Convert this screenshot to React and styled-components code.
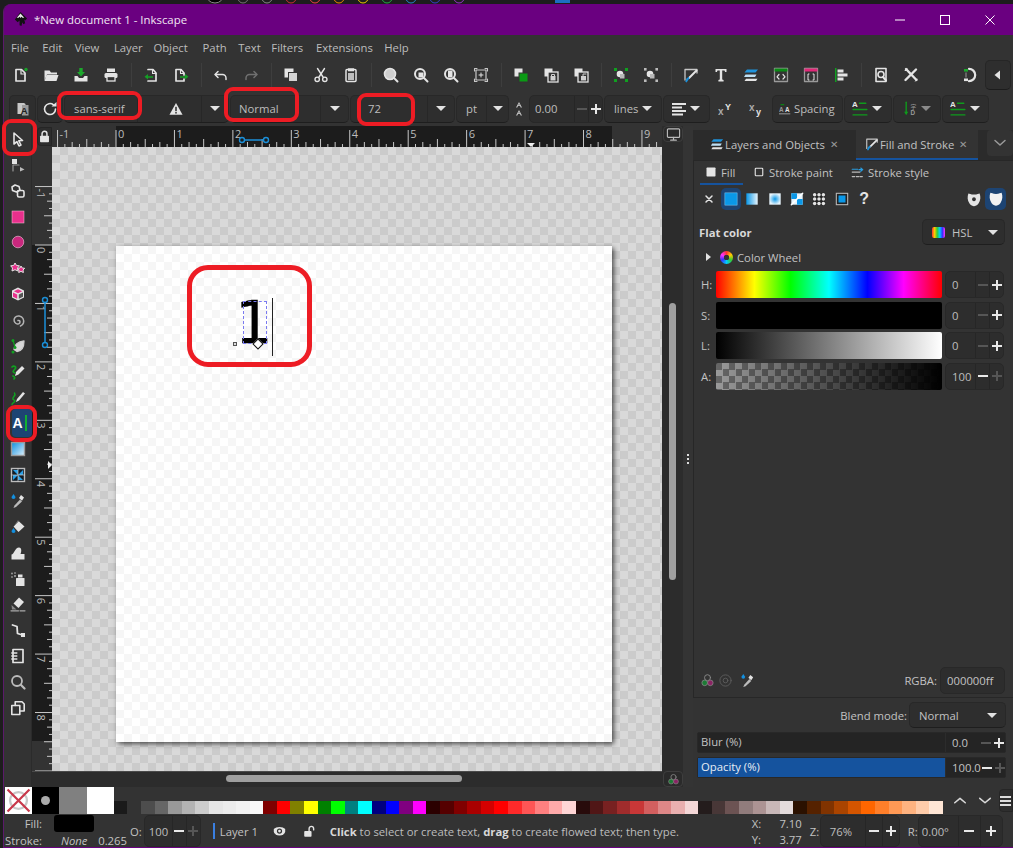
import React from 'react';
import styled, { createGlobalStyle } from 'styled-components';

const UI = '"Open Sans", "Noto Sans", "Liberation Sans", sans-serif';
const W = '#e4e4e4';
const B = '#1b8fd8';
const P = '#e8308c';

const GlobalStyle = createGlobalStyle`
  html, body { margin: 0; padding: 0; background: #1d1d1d; }
  * { box-sizing: border-box; }
  #root { width: 1013px; height: 848px; overflow: hidden; }
`;

const Screen = styled.div`
  position: relative; width: 1013px; height: 848px; overflow: hidden;
  background: #1d1d1d; font-family: ${UI}; font-size: 11.3px; color: #c2c2c2;
  display: flex; flex-direction: column; align-items: flex-end;
`;
const TopBand = styled.svg`display: block; width: 1013px; height: 4px; flex: none;`;
const Window = styled.div`
  width: 1010px; height: 844px; flex: none; background: #333; display: flex; flex-direction: column;
  border-radius: 8px 0 0 0; overflow: hidden; border-left: 1px solid #5b1a6b; border-bottom: 1px solid #6a0080;
`;
const TitleBar = styled.header`
  height: 31px; flex: none; background: #6a0080; display: flex; align-items: center; padding-left: 9px; color: #f0e6f2;
`;
const AppTitle = styled.span`font-size: 11.4px; margin-left: 6px; flex: 1; white-space: nowrap;`;
const WinControls = styled.div`display: flex; align-items: center; margin-right: 1px;`;
const WinButton = styled.span`width: 45px; height: 31px; display: flex; align-items: center; justify-content: center;`;
const MenuBar = styled.nav`height: 25px; flex: none; display: flex; align-items: center; padding-left: 7px; color: #bdbdbd;`;
const MenuItem = styled.span`margin-right: ${p => p.$gap}px; white-space: nowrap;`;
const CommandBar = styled.div`height: 31px; flex: none; display: flex; align-items: center; padding: 0 0 2px 2px;`;
const Slot = styled.span`
  width: ${p => p.$w || 30}px; height: ${p => p.$h || 24}px; flex: none; display: flex; align-items: center; justify-content: center;
`;
const Sep = styled.span`width: 10px; height: 24px; flex: none; background: linear-gradient(#3e3e3e,#3e3e3e) center / 1px 100% no-repeat;`;
const Grow = styled.span`flex: 1;`;
const SquareButton = styled.span`
  width: 26px; height: 30px; margin-right: 2px; flex: none; display: flex; align-items: center; justify-content: center;
  background: #2e2e2e; border: 1px solid #262626; border-bottom-color: #1c1c1c; border-radius: 5px;
`;
const TextBar = styled.div`height: 35px; flex: none; display: flex; align-items: center; gap: 1px; padding: 0 0 0 5px;`;
const Control = styled.div`
  width: ${p => p.$w}px; height: 28px; flex: none; display: flex; align-items: center; padding-left: ${p => p.$pad ?? 0}px;
  justify-content: ${p => p.$center ? 'center' : 'flex-start'};
  background: #2e2e2e; border: 1px solid #282828; border-bottom-color: #1e1e1e; border-radius: 5px; color: #bdbdbd; white-space: nowrap;
`;
const PlainSlot = styled.span`width: ${p => p.$w}px; height: 28px; flex: none; display: flex; align-items: center; justify-content: center;`;
const ComboArrow = styled.span`
  width: ${p => p.$w || 27}px; height: 100%; margin-left: auto; flex: none; display: flex; align-items: center; justify-content: center;
  border-left: 1px solid #272727;
`;
const Caret = styled.i`
  display: block; width: 0; height: 0; margin-left: ${p => p.$ml || 0}px; border-left: 5px solid transparent; border-right: 5px solid transparent;
  border-top: 5.5px solid ${p => p.$dim ? '#8a8a8a' : '#e2e2e2'};
`;
const Workspace = styled.div`flex: 1; min-height: 0; display: flex;`;
const ToolRail = styled.aside`
  width: 28px; flex: none; padding: 0 0 0 1px; display: flex; flex-direction: column; align-items: center; border-right: 1px solid #2b2b2b;
`;
const Tool = styled.span`width: 24px; height: 25.86px; flex: none; display: flex; align-items: center; justify-content: center;`;
const ActiveTool = styled.span`
  width: 20px; height: 27.86px; margin: -1px 0 -1px 7px; padding-left: 1px; flex: none; display: flex; align-items: center; gap: 2px;
  background: #1d4473; border-radius: 4px; color: #fff; font: 700 14px "Liberation Sans", sans-serif;
`;
const Stage = styled.section`
  width: 661px; flex: none; display: grid; grid-template-columns: 20px 610px 31px; grid-template-rows: 21px 624px 16px;
`;
const Corner = styled.div`display: flex; align-items: center; justify-content: flex-end; background: #333;`;
const LockButton = styled.span`
  width: 15px; height: 19px; display: flex; align-items: center; justify-content: center; background: #2d2d2d; border-radius: 4px 0 0 4px; border: 1px solid #252525;
`;
const Rule = styled.svg`display: block;`;
const Canvas = styled.main`
  background: conic-gradient(#cbcbcb 25%, #d9d9d9 0 50%, #cbcbcb 0 75%, #d9d9d9 0) 0 0 / 16px 16px;
  overflow: hidden; padding: 99px 0 0 64px;
`;
const Sheet = styled.div`
  position: relative; width: 496px; height: 496px;
  background: conic-gradient(#fff 25%, #f6f6f6 0 50%, #fff 0 75%, #f6f6f6 0) 0 0 / 16px 16px;
  box-shadow: 2px 2px 5px rgba(0,0,0,.65);
`;
const Glyph = styled.span`
  position: absolute; left: 119px; top: 42px; font: 59px/70px "DejaVu Sans", sans-serif; color: #000; -webkit-text-stroke: 0.3px #000;
`;
const DashBox = styled.span`position: absolute; left: 127px; top: 55px; width: 24px; height: 43px; border: 1px dashed #7a7af0;`;
const Caretline = styled.span`position: absolute; left: 156px; top: 52px; width: 1px; height: 58px; background: #222;`;
const HandleSq = styled.span`position: absolute; left: 117px; top: 96px; width: 4px; height: 4px; border: 1px solid #555; background: #ddd;`;
const HandleDia = styled.span`position: absolute; left: 138px; top: 94px; width: 8px; height: 8px; transform: rotate(45deg); border: 1px solid #111; background: #fff;`;
const ScrollCell = styled.div`display: flex; background: #2c2c2c;`;
const VTrack = styled.div`width: 21px; flex: none; padding: 156px 0 0 7px;`;
const VThumb = styled.div`width: 7px; height: 277px; border-radius: 4px; background: #9f9f9f;`;
const GripCell = styled.div`flex: 1; background: #343434; display: flex; flex-direction: column; justify-content: center; align-items: center; gap: 2px;`;
const GripDot = styled.i`display: block; width: 2px; height: 2px; background: #dcdcdc;`;
const HTrack = styled.div`grid-column: 1 / span 2; background: #2c2c2c; border-top: 1px solid #4a4a4a; padding: 3px 0 0 194px;`;
const HThumb = styled.div`width: 236px; height: 7px; border-radius: 4px; background: #9f9f9f;`;
const ManagedCell = styled.div`display: flex; background: #2c2c2c;`;
const ManagedButton = styled.span`
  width: 20px; height: 16px; margin-left: 1px; flex: none; display: flex; align-items: center; justify-content: center;
  border: 1px solid #3e3e3e; border-radius: 4px; background: #2a2a2a;
`;
const ManagedFill = styled.span`flex: 1; background: #343434;`;
const Dock = styled.aside`flex: 1; min-width: 0; display: flex; flex-direction: column; padding-bottom: 5px;`;
const TabStrip = styled.div`height: 34px; flex: none; padding-top: 4px; display: flex; background: linear-gradient(#333 4px, #2b2b2b 4px);`;
const DockTab = styled.div`
  width: ${p => p.$w}px; flex: none; display: flex; align-items: center; gap: 1px; padding-left: ${p => p.$pad}px; white-space: nowrap; color: #c2c2c2;
  background: ${p => p.$on ? '#333' : 'transparent'}; border-bottom: 2px solid ${p => p.$on ? '#15539e' : 'transparent'};
`;
const TabClose = styled.span`margin-left: 4px; color: #9a9a9a; font-size: 10px;`;
const TabMenu = styled.span`
  width: 26px; height: 26px; margin: 0 0 0 auto; display: flex; align-items: center; justify-content: center; background: #333; border-radius: 4px;
`;
const Frame = styled.div`
  flex: 1; min-height: 0; display: flex; flex-direction: column; border: 1px solid #272727; border-right: 0;
`;
const SubTabs = styled.div`height: 24px; flex: none; display: flex; padding-left: 6px; align-items: stretch;`;
const SubTab = styled.div`
  width: ${p => p.$w}px; flex: none; display: flex; align-items: center; gap: 4px; padding-left: ${p => p.$pad}px; white-space: nowrap;
  border-bottom: 2px solid ${p => p.$on ? '#15539e' : 'transparent'};
`;
const PaintRow = styled.div`height: 28px; flex: none; display: flex; align-items: center; padding-left: 3px;`;
const PaintSlot = styled.span`
  width: ${p => p.$w || 22.4}px; height: 22px; flex: none; display: flex; align-items: center; justify-content: center;
  border-radius: 5px; background: ${p => p.$on ? '#1d4473' : 'transparent'}; color: #e4e4e4; font: 700 16px "Liberation Sans", sans-serif;
`;
const FlatRow = styled.div`height: 38px; flex: none; display: flex; align-items: center; padding-left: 5px;`;
const FlatLabel = styled.strong`flex: 1; font-weight: 700; color: #d8d8d8;`;
const ModeButton = styled.div`
  width: 83px; height: 26px; margin-right: 8px; display: flex; align-items: center; gap: 7px; padding-left: 9px; flex: none;
  background: #2e2e2e; border: 1px solid #282828; border-bottom-color: #1e1e1e; border-radius: 5px;
`;
const RainbowChip = styled.span`width: 13px; height: 11px; border-radius: 2px; background: linear-gradient(90deg,#f33,#fc0,#3c3,#0cf,#33f,#f3f);`;
const WheelRow = styled.div`height: 18px; margin-top: -3px; flex: none; display: flex; align-items: center; padding-left: 12px; gap: 5px;`;
const TriRight = styled.i`width: 0; height: 0; border-top: 4.5px solid transparent; border-bottom: 4.5px solid transparent; border-left: 5px solid #e2e2e2; margin-right: 4px;`;
const Wheel = styled.span`
  width: 13px; height: 13px; border-radius: 50%; flex: none; margin-right: -1px;
  background: radial-gradient(circle, #333 0 2.6px, transparent 3px), conic-gradient(#f33,#fc0,#3c3,#0cf,#33f,#f3f,#f33);
`;
const Sliders = styled.div`margin-top: 5px; flex: none; display: flex; flex-direction: column; gap: 3.6px; padding-left: 7px;`;
const SliderRow = styled.div`height: 27px; display: grid; grid-template-columns: 15px 226px 59px; align-items: center;`;
const SliderLabel = styled.span`color: #c2c2c2;`;
const Track = styled.div`height: 27px; border-radius: 2px; background: ${p => p.$bg};`;
const Spin = styled.div`
  width: ${p => p.$w}px; height: ${p => p.$h || 27}px; flex: none; display: flex; align-items: center; margin-left: ${p => p.$ml || 0}px;
  padding-left: ${p => p.$pad ?? 6}px; background: #2d2d2d; border: 1px solid #282828; border-radius: 5px; color: #bdbdbd; white-space: nowrap;
`;
const SpinValue = styled.span`flex: 1;`;
const SpinBtn = styled.span`
  width: ${p => p.$w || 14}px; height: 100%; flex: none; display: flex; align-items: center; justify-content: center; position: relative;
  border-left: ${p => p.$line ? '1px solid #262626' : '0'};
  color: ${p => p.$dim ? '#565656' : '#e8e8e8'};
`;
const Bar = styled.i`display: block; width: ${p => p.$s}px; height: 2px; background: currentColor;`;
const BarV = styled.i`position: absolute; display: block; width: 2px; height: ${p => p.$s}px; background: currentColor;`;
const DockSpacer = styled.div`flex: 1;`;
const RgbaRow = styled.div`height: 27px; margin-bottom: 3px; flex: none; display: flex; align-items: center; padding-left: 6px; gap: 3px;`;
const RgbaField = styled.span`
  width: 65px; height: 27px; margin-right: 8px; flex: none; display: flex; align-items: center; padding-left: 6px;
  background: #2d2d2d; border: 1px solid #282828; border-radius: 5px;
`;
const BlendRow = styled.div`height: 34px; flex: none; display: flex; align-items: center; justify-content: flex-end; padding-right: 7px;`;
const BlendCombo = styled.div`
  width: 97px; height: 26px; margin-left: 2px; display: flex; align-items: center; justify-content: space-between; padding: 0 8px 0 9px;
  background: #2e2e2e; border: 1px solid #282828; border-bottom-color: #1e1e1e; border-radius: 5px;
`;
const ScaleRow = styled.div`
  width: 309px; height: 21px; margin: 0 0 4px 4px; flex: none; display: flex; align-items: center; background: #242424; border: 1px solid #282828; border-radius: 2px;
`;
const ScaleLabel = styled.span`
  width: 248px; height: 100%; flex: none; padding-left: 3px; line-height: 18px; border-right: 1px solid #2c2c2c; color: ${p => p.$on ? '#e8eef5' : '#c2c2c2'};
  background: ${p => p.$on ? '#15539e' : 'transparent'};
`;
const ScaleValue = styled.span`flex: 1; padding-left: 6px;`;
const PaletteRow = styled.div`height: 28px; flex: none; display: flex; align-items: flex-end; padding: 0 0 1px 1px;`;
const BigSwatch = styled.span`width: 27.2px; height: 27px; flex: none; background: ${p => p.$c}; display: flex; align-items: center; justify-content: center;`;
const Dot = styled.i`width: 9px; height: 9px; border-radius: 50%; background: #aaa;`;
const SmallSwatch = styled.span`width: 13.6px; height: 13px; flex: none; background: ${p => p.$c};`;
const PaletteEnd = styled.div`flex: 1; display: flex; align-self: stretch; align-items: center; padding-left: 5px;`;
const PaletteMenu = styled.span`
  width: 14px; height: 23px; margin-left: 1px; flex: none; display: flex; flex-direction: column; gap: 2px; align-items: center; justify-content: center;
  border: 1px solid #262626; border-radius: 4px 0 0 4px; background: #2e2e2e;
`;
const MenuLine = styled.i`display: block; width: 11px; height: 2px; background: #ddd;`;
const StatusBar = styled.footer`height: 32px; flex: none; display: flex; align-items: stretch; white-space: nowrap;`;
const StyleGrid = styled.div`
  width: 123px; flex: none; display: grid; grid-template-columns: 38px 1fr; grid-template-rows: 17px 16px; align-items: center;
`;
const StyleLabel = styled.span`text-align: right;`;
const FillChip = styled.span`width: 40px; height: 17px; margin-left: 12px; background: #000; border-radius: 3px;`;
const StrokeInfo = styled.span`display: flex; justify-content: space-between; padding-left: 19px;`;
const Opa = styled.div`display: flex; align-items: center; gap: 2px; margin-left: 3px;`;
const LayerTag = styled.div`display: flex; align-items: center; margin-left: 12px; width: 117px;`;
const LayerBar = styled.i`width: 2px; height: 16px; background: #3a7fe0; margin-right: 5px;`;
const LayerIcons = styled.span`display: flex; align-items: center; margin-left: 15px; gap: 17px;`;
const Hint = styled.div`display: flex; align-items: center; width: 418px; color: #bdbdbd;`;
const Bold = styled.b`font-weight: 700; color: #d8d8d8;`;
const Coords = styled.div`width: 62px; display: grid; grid-template-columns: 1fr auto; grid-template-rows: 16px 16px; align-items: center; padding-left: 4px; padding-right: 8px;`;
const ShortLabel = styled.span`margin-left: ${p => p.$ml || 0}px; display: flex; align-items: center; width: 10px; flex: none;`;
const Mark = styled.div`
  position: absolute; left: ${p => p.$x}px; top: ${p => p.$y}px; width: ${p => p.$w}px; height: ${p => p.$h}px;
  border: ${p => p.$b || 4}px solid #ed1c24; border-radius: ${p => p.$r || 9}px; pointer-events: none;
`;
const SvgIcon = styled.svg`display: block; flex: none;`;

const st = (c = W, w = 1.5) => ({ fill: 'none', stroke: c, strokeWidth: w, strokeLinejoin: 'round', strokeLinecap: 'round' });

const ICONS = {
  new: <><path d="M3 2.5h5.5L12 6v8H3z" {...st(W, 1.7)} /><path d="M8 2.5V7h4" {...st(W, 1.2)} /><circle cx="13" cy="2.5" r="1.7" fill="#18a028" /></>,
  open: <><path d="M1.5 3.5h5l1.5 2h6v2H4l-2.5 6z" fill={W} /><path d="M3.5 8h12l-2 6H1.5z" fill={W} /></>,
  save: <><path d="M6.3 1h3.4v4H12L8 9.5 4 5h2.3z" fill="#1ca82c" /><path d="M1.5 9h3l1.5 2h4l1.5-2h3v5.5h-13z" fill={W} /></>,
  print: <><rect x="4" y="1.5" width="8" height="3.5" fill={W} /><rect x="1.5" y="6" width="13" height="5" rx="1.5" fill={W} /><rect x="4" y="9.5" width="8" height="4.5" fill="#333" stroke={W} strokeWidth="1.3" /></>,
  imp: <><path d="M5 2.5h5L13 6v8H5" {...st(W, 1.7)} /><path d="M9.5 2.5V6.5H13" {...st(W, 1.1)} /><path d="M10 9.2H5V7L1.5 9.7 5 12.5v-1.7h5z" fill="#14a024" /></>,
  exp: <><path d="M3 14V2.5h5L11 6v2M11 12v2H3" {...st(W, 1.7)} /><path d="M7.5 2.5V6.5H11" {...st(W, 1.1)} /><path d="M7 9.2h5V7l3.5 2.7-3.5 2.8v-1.7H7z" fill="#14a024" /></>,
  undo: <><path d="M5 4.5L2 7.5l3 3" {...st(W, 1.5)} /><path d="M2.5 7.5H9.5a3.5 3.5 0 0 1 3.5 3.5v1.5" {...st(W, 1.5)} /></>,
  redo: <><path d="M11 4.5l3 3-3 3" {...st('#707070', 1.5)} /><path d="M13.5 7.5H6.5A3.5 3.5 0 0 0 3 11v1.5" {...st('#707070', 1.5)} /></>,
  copy: <><rect x="1.5" y="1.5" width="9" height="9" fill={W} /><rect x="5.5" y="5.5" width="9" height="9" fill="#d4d4d4" stroke="#333" /></>,
  cut: <><path d="M4.5 1.5l5.5 8.5M11.500 1.500L6 10" {...st(W, 1.4)} /><circle cx="4.2" cy="12.3" r="2.2" {...st(W, 1.4)} /><circle cx="11.8" cy="12.3" r="2.2" {...st(W, 1.4)} /></>,
  paste: <><rect x="3" y="2.5" width="10" height="12" rx="1" {...st(W, 1.5)} /><rect x="5" y="1.3" width="6" height="3" fill={W} /><rect x="5" y="6" width="6" height="7" fill="#bdbdbd" /></>,
  zoomSel: <><circle cx="7" cy="7" r="5.5" fill="#cfcfcf" /><circle cx="7" cy="7" r="5.5" {...st(W, 1.6)} /><path d="M11 11l3.5 3.5" {...st(W, 2)} /></>,
  zoomDraw: <><circle cx="7" cy="7" r="5" {...st(W, 2)} /><rect x="5.5" y="5.5" width="5" height="5" fill={W} /><path d="M11 11l3.5 3.5" {...st(W, 2)} /></>,
  zoomPage: <><circle cx="7" cy="7" r="5" {...st(W, 2)} /><rect x="5" y="3.5" width="4.5" height="7" fill={W} /><path d="M11 11l3.5 3.5" {...st(W, 2)} /></>,
  zoomCenter: <><path d="M1.5 4V1.5H4M12 1.5h2.5V4M14.5 12v2.5H12M4 14.5H1.5V12" {...st('#c8c8c8', 1.1)} /><rect x="3" y="3" width="10" height="10" {...st('#c8c8c8', 1.2)} /><path d="M8 6v4M6 8h4" {...st(W, 1)} /></>,
  raise: <><rect x="1.5" y="1.5" width="8" height="8" fill={W} /><rect x="6" y="6" width="9" height="9" fill="#0a9a14" stroke="#333" /></>,
  lockA: <><rect x="1.5" y="1.5" width="8" height="8" fill={W} /><rect x="5" y="5" width="10" height="10" fill="#333" stroke={W} strokeWidth="1.3" /><rect x="7.5" y="9" width="5" height="4.5" fill="#cfcfcf" /><path d="M8.5 9V7.5h3V9" {...st('#cfcfcf', 1)} /></>,
  lockB: <><rect x="1.5" y="1.5" width="8" height="8" fill={W} /><rect x="5" y="5" width="10" height="10" fill="#333" stroke={W} strokeWidth="1.3" /><rect x="8" y="9" width="5" height="4.5" fill="#cfcfcf" /><path d="M10 9V7h3" {...st('#cfcfcf', 1)} /></>,
  grp: <><rect x="1" y="1" width="3" height="3" fill="#10a020" /><rect x="12" y="1" width="3" height="3" fill="#10a020" /><rect x="1" y="12" width="3" height="3" fill="#10a020" /><rect x="12" y="12" width="3" height="3" fill="#10a020" /><circle cx="7" cy="7" r="3.3" fill={W} /><rect x="7" y="7" width="4.5" height="4.5" fill="#b8b8b8" /></>,
  ungrp: <><rect x="1" y="1" width="2.6" height="2.6" fill="#bbb" /><rect x="12.4" y="1" width="2.6" height="2.6" fill="#bbb" /><rect x="1" y="12.4" width="2.6" height="2.6" fill="#bbb" /><rect x="12.4" y="12.4" width="2.6" height="2.6" fill="#bbb" /><circle cx="7" cy="7" r="3.3" fill={W} /><rect x="7" y="7" width="4.5" height="4.5" fill="#b8b8b8" /></>,
  fillStroke: <><path d="M2 13V2.5h12V6" {...st('#c8c8c8', 1.3)} /><path d="M13.5 3.5L6 11" {...st(W, 2)} /><path d="M6 10.5L3 15l1-3z" fill={B} stroke={B} strokeWidth="1.5" /></>,
  textBig: <path d="M2.5 2h11v3h-1.4l-.6-1.5H9.2V12.500l1.4.6V14.500H5.400V13.100l1.400-.6V3.500H4.500L3.900 5H2.500z" fill={W} />,
  layers: <><path d="M4 2.500h11l-2.500 3H1.500z" fill="#1f93dc" /><path d="M2.500 7.500h11l-1.500 2.500H1z" fill="#bfe0f4" /><path d="M3 11.800h11.500l-1.500 2.200H1.500z" fill={W} /></>,
  xml: <><rect x="1.500" y="1.500" width="13" height="13" {...st('#9a9a9a', 1.300)} /><rect x="1.500" y="1.500" width="13" height="3" fill="#0a8a14" /><path d="M6 7.500L4 9.800l2 2.200M10 7.500l2 2.300-2 2.200" {...st(W, 1.200)} /></>,
  css: <><rect x="1.500" y="1.500" width="13" height="13" {...st('#9a9a9a', 1.300)} /><rect x="1.500" y="1.500" width="13" height="3" fill="#e02878" /><path d="M6 7H5v6h1M10 7h1v6h-1" {...st(W, 1)} /></>,
  align: <><rect x="2" y="1" width="1.500" height="14" fill="#10a020" /><rect x="4.500" y="2.500" width="6" height="3" fill={W} /><rect x="4.500" y="6.500" width="10" height="3" fill={W} /><rect x="4.500" y="10.500" width="6" height="3" fill={W} /></>,
  find: <><path d="M3 1.500h10v13H3z" {...st(W, 1.600)} /><circle cx="8" cy="7.500" r="3" {...st(W, 1.600)} /><path d="M10 10l3 3.500" {...st(W, 2)} /></>,
  tools: <><path d="M3 2l10.500 11M13 2.500L2.500 13" {...st(W, 2.400)} /><path d="M1.500 4A2.800 2.800 0 0 1 5 1.500L3 4zM14.500 11.500a2.800 2.800 0 0 1-3 3l2-2.500z" fill={W} /></>,
  snap: <><path d="M7 1.800a6.200 6.200 0 0 1 0 12.400" {...st(W, 2.200)} /><rect x="2" y="2" width="4" height="2.600" fill="#1ca82c" /><rect x="2" y="11.500" width="4" height="2.600" fill={W} /><path d="M4 6v4" {...st('#777', 1.500)} /></>,
  fontCollect: <><path d="M2.500 2h6.500l1.500 1V14l-1.500-1H2.500z" fill="#c8c8c8" /><path d="M7 4h6.500v10.500H7z" fill="#9a9a9a" /><text x="5.800" y="13" fontSize="9.500" fontFamily="Liberation Sans" fontWeight="700" fill="#222">A</text></>,
  reload: <><path d="M13.500 8A5.500 5.500 0 1 1 11.500 3.800" {...st(W, 1.600)} /><path d="M9.500 5.500h5V1z" fill={W} /></>,
  warn: <><path d="M8 1l7.500 13.500H.5z" fill={W} /><rect x="7.100" y="5.500" width="1.800" height="5" fill="#333" /><rect x="7.100" y="11.500" width="1.800" height="1.700" fill="#333" /></>,
  aa: <><path d="M8 1L11 6.500H9.700L9 5H7L6.300 6.500H5z M8 2.800L7.400 4.200H8.600z" fill="#c8c8c8" /><path d="M8 9L11 14.500H9.700L9 13H7L6.300 14.500H5z M8 10.800L7.400 12.200H8.600z" fill="#c8c8c8" /></>,
  alignL: <><rect x="1" y="2" width="14" height="2" fill={W} /><rect x="1" y="5.500" width="10" height="2" fill={W} /><rect x="1" y="9" width="14" height="2" fill={W} /><rect x="1" y="12.500" width="11" height="2" fill={W} /></>,
  sup: <><text x="0" y="14" fontSize="10" fontWeight="700" fontFamily="Liberation Sans" fill="#aaa">x</text><text x="7" y="9" fontSize="9" fontWeight="700" fontFamily="Liberation Sans" fill={W}>Y</text></>,
  sub: <><text x="0" y="10" fontSize="10" fontWeight="700" fontFamily="Liberation Sans" fill="#aaa">x</text><text x="7" y="14" fontSize="9" fontWeight="700" fontFamily="Liberation Sans" fill={W}>y</text></>,
  spaceA: <><text x="0" y="12" fontSize="8.500" fontWeight="700" fontFamily="Liberation Sans" fill="#999">A</text><text x="8" y="12" fontSize="8.500" fontWeight="700" fontFamily="Liberation Sans" fill={W}>A</text><rect x="2" y="1.500" width="5" height="1.500" fill="#0a8a14" /><rect x="0" y="14" width="15" height="1" fill="#bbb" /></>,
  lineA: <><text x="0" y="7" fontSize="7.500" fontWeight="700" fontFamily="Liberation Sans" fill={W}>A</text><path d="M7 3h6M1 9h13M1 14h13" {...st('#0f9a1c', 1.300)} /></>,
  lineB: <><path d="M3 2v11" {...st('#0f9a1c', 1.300)} /><path d="M1 11l2 3 2-3z" fill="#0f9a1c" /><text x="7" y="8" fontSize="5.500" fontFamily="Noto Sans CJK SC" fill="#999">字</text><text x="7" y="14.500" fontSize="6" fontFamily="Liberation Sans" fontWeight="700" fill="#999">D</text></>,
  select: <path d="M4 2l8.500 7.500-3.700.3 2.200 4.200-2 1-2.100-4.300L4 13z" {...st(W, 1.600)} />,
  node: <><rect x="2" y="2" width="5" height="5" fill={W} /><path d="M3 8v6M3 8h6" {...st('#999', 1.200)} /><path d="M10 10l4.500 2.500-4.500 2z" fill="#bbb" /></>,
  tweakShape: <><path d="M5 2l4 1.500 1 3.500-3.500 2-4-1.500L2 4z" {...st(W, 1.600)} /><rect x="7.500" y="7.500" width="6.500" height="6.500" rx="1.500" {...st(W, 1.600)} /></>,
  rect: <rect x="2" y="2" width="12" height="12" fill={P} stroke="#f8c8dc" strokeWidth=".5" />,
  circle: <circle cx="8" cy="8" r="5.800" fill="#c9287e" stroke="#e8b0cc" strokeWidth=".7" />,
  star: <><path d="M5 3l1.500 2.500 3 .3L7.500 8l.5 3-3-1.300L2 11l.5-3L.7 5.800l3-.3z" fill={P} stroke={W} strokeWidth="1" /><path d="M11 6l1.200 2 2.500.3-1.700 1.700.4 2.500-2.400-1.100-2.300 1.100.3-2.500L7.500 8.300l2.500-.3z" fill={P} stroke={W} strokeWidth="1" /></>,
  cube: <><path d="M8 1.500l6 3v7l-6 3-6-3v-7z" fill={W} /><path d="M8 3.200l4.200 2L8 7.300l-4.200-2.100z" fill={P} /><path d="M3 6.500l4.200 2.100v4.200L3 10.700z" fill={P} /><path d="M13 6.500L8.800 8.600v4.200L13 10.700z" fill="#555" /></>,
  spiral: <path d="M8 8.500a1.500 1.500 0 0 1 2 1.500c0 2-2.500 2.500-4 1.500S3 8 5 5.500s6.500-2 8 1 .5 6.500-2.500 7.500" {...st('#b4b4b4', 1.500)} />,
  pencil: <><path d="M4 11.500C4 7 8 3.500 14 3c0 5-2 10-7 10.500z" {...st('#cfcfcf', 1.300)} fill="#d8d8d8" /><path d="M3 2.500l2 6.500" {...st('#10a020', 1.200)} /><circle cx="3" cy="2.500" r="1.500" fill="#10a020" /><circle cx="5" cy="9.500" r="1.500" fill="#10a020" /><circle cx="3" cy="14" r="1.500" fill="#10a020" /></>,
  pen: <><path d="M6 8l6-6 2.500 2.500-6 6L5 12z" fill={W} /><path d="M2 3c2-2 5 0 3 2s-3 3 0 4M3 12c2 1 2 2 1 3" {...st('#10a020', 1.700)} /></>,
  callig: <><path d="M7 9l6-7 2 1.500-6 7-3 1.500z" fill={W} /><path d="M4.500 3c1.500 2-.5 3-1.500 5s2 2 2 3-3 2-3 3.500" {...st('#10a020', 1.500)} /></>,
  gradient: <><defs><linearGradient id="rgr" x1="0" y1="0" x2="1" y2="1"><stop offset="0" stopColor="#0c8fe0" /><stop offset="1" stopColor="#dff1fb" /></linearGradient></defs><rect x="1.500" y="1.500" width="13" height="13" fill="url(#rgr)" stroke="#9a9a9a" strokeWidth="1.400" /></>,
  mesh: <><rect x="1.500" y="1.500" width="13" height="13" fill="#111c26" stroke="#bbb" strokeWidth="1.400" /><path d="M8 8L3 3h5zM8 8l5-5v5zM8 8l5 5H8zM8 8l-5 5V8z" fill="#2aa0e8" /><path d="M8 1.500v13M1.500 8h13" {...st('#ccc', .7)} /></>,
  dropper: <><path d="M4.500 12.500L10 6.500l2 2-6 5.500-2.500 1z" fill="#bbb" /><path d="M9 5l2-3 3 2.500-2 3.300z" fill={W} /><path d="M3.500 1l2 3a2 2 0 1 1-4 0z" fill="#1390e0" /></>,
  bucket: <><path d="M8 1.500l6.500 6-6 5.500-5-5.500z" fill={W} /><path d="M3 7.500L8.500 2" {...st('#333', 1)} /><path d="M3.500 9l2 3a2 2 0 1 1-4 0z" fill="#1390e0" /></>,
  tweak: <path d="M1.500 14.500V9.500C4 9.500 5 2.500 9 2.500c3 0 2.500 4.500 1.500 6.500h4v5.500z" fill={W} />,
  spray: <><rect x="6" y="7" width="8.500" height="8" rx=".5" fill={W} /><rect x="8" y="3.500" width="4.500" height="3" fill={W} /><circle cx="2" cy="2.500" r="1" fill="#999" /><circle cx="5" cy="2" r="1" fill="#888" /><circle cx="2" cy="6" r="1" fill="#888" /><circle cx="5" cy="5" r="1" fill="#aaa" /></>,
  eraser: <><path d="M9 1.500l5 4.500-5.500 6-5-4.500z" fill={W} /><path d="M1.500 9l5 4.500H2z" fill="#888" /><path d="M1 14.800h7.500M10 14.800h5" {...st('#aaa', 1.200)} /></>,
  connector: <><path d="M2.500 3l4.500 1.500.5 7 5 1.500" {...st(W, 1.800)} /><rect x="11" y="11" width="4" height="4" fill={W} /></>,
  pages: <><path d="M3 1.500h10v13H3z" {...st(W, 1.700)} /><path d="M1.800 5h5M1.800 8h5M1.800 11h5" {...st(W, 1.500)} /></>,
  magnifier: <><circle cx="7" cy="7" r="5" {...st('#bbb', 1.800)} /><path d="M10.800 10.800l3.700 3.700" {...st('#bbb', 2.200)} /></>,
  docs: <><path d="M1.800 5.500h8v9h-8z" {...st(W, 1.600)} /><path d="M5.200 5.500V1.800h6.800l2.200 2.200V11h-4" {...st(W, 1.600)} /></>,
  lock: <><rect x="2.500" y="7" width="11" height="8" fill={W} rx="1" /><path d="M5 7V4.500a3 3 0 0 1 6 0V7" {...st(W, 1.800)} /></>,
  unlock: <><rect x="1.500" y="7.500" width="9" height="7" fill={W} rx="1" /><path d="M7.500 7.500V4.500a2.800 2.800 0 0 1 5.600 0V6" {...st(W, 1.700)} /></>,
  eye: <><path d="M1 5c3-3.500 11-3.500 14 0v3a7 5 0 0 1-14 0z" fill={W} /><circle cx="8" cy="7.500" r="3.200" fill="#333" /><circle cx="8" cy="7.500" r="1.700" fill={W} /></>,
  display: <><rect x="1.500" y="2" width="13" height="9" rx="1" {...st('#bbb', 1.200)} /><path d="M5 14h6M8 11v3" {...st('#bbb', 1.300)} /></>,
  managed: <><circle cx="8" cy="5" r="3.200" {...st('#888', 1)} /><circle cx="5" cy="10.500" r="3" fill="#1d7a35" stroke="#888" strokeWidth=".8" /><circle cx="11" cy="10.500" r="3" fill="#8a2464" stroke="#888" strokeWidth=".8" /></>,
  managedRing: <><circle cx="8" cy="8" r="6" {...st('#5c5c5c', 1)} /><circle cx="8" cy="8" r="2.500" {...st('#5c5c5c', 1)} /></>,
  chevDown: <path d="M3 5.500L8 10l5-4.500" {...st('#9a9a9a', 1.500)} />,
  chevUp: <path d="M2 10l6-5 6 5" {...st('#d8d8d8', 1.800)} />,
  chevDn: <path d="M2 5l6 5 6-5" {...st('#d8d8d8', 1.800)} />,
  triLeft: <path d="M10 3.500v9L4.500 8z" fill={W} />,
  fillBox: <rect x="2" y="2" width="12" height="12" rx="1" fill={W} />,
  strokeBox: <rect x="3" y="3" width="10" height="10" rx="1" {...st(W, 1.500)} />,
  strokeStyle: <><path d="M1.500 7.500H11M1.500 13h3M6.500 13h3M11 13h3" {...st('#bbb', 1.400)} /><path d="M10 4.500h4M12 2.500l2.500 2-2.500 2" {...st('#2a9de0', 1.400)} /><path d="M1.500 4h7" {...st('#2a9de0', 1.400)} /></>,
  pNone: <path d="M4 4l8 8M12 4l-8 8" {...st(W, 2)} />,
  pFlat: <rect x="1" y="1" width="14" height="14" fill="#0a98e8" stroke="#7fc4ee" strokeWidth=".6" />,
  pLinear: <><defs><linearGradient id="pg1"><stop offset="0" stopColor="#0a98e8" /><stop offset="1" stopColor="#e6f4fc" /></linearGradient></defs><rect x="1.500" y="1.500" width="13" height="13" fill="url(#pg1)" /></>,
  pRadial: <><defs><radialGradient id="pg2"><stop offset="0" stopColor="#0a98e8" /><stop offset="1" stopColor="#e6f4fc" /></radialGradient></defs><rect x="1.500" y="1.500" width="13" height="13" fill="url(#pg2)" /></>,
  pMesh: <><rect x="1.500" y="1.500" width="13" height="13" fill="#e6f4fc" /><path d="M1.500 1.500h6.500v6.500H1.500z" fill="#0a98e8" /><path d="M8 8h6.500v6.500H8z" fill="#0a98e8" /><path d="M1.500 14.500L14.500 1.500" {...st('#fff', 1.600)} /></>,
  pPattern: <><rect x="1" y="1" width="14" height="14" fill="#222" /><g fill={W}><circle cx="3" cy="3" r="2" /><circle cx="8" cy="3" r="2" /><circle cx="13" cy="3" r="2" /><circle cx="3" cy="8" r="2" /><circle cx="8" cy="8" r="2" /><circle cx="13" cy="8" r="2" /><circle cx="3" cy="13" r="2" /><circle cx="8" cy="13" r="2" /><circle cx="13" cy="13" r="2" /></g></>,
  pSwatch: <><rect x="1.500" y="1.500" width="13" height="13" fill="#222" stroke="#bbb" strokeWidth="1.200" /><rect x="4" y="4" width="8" height="8" fill="#0a98e8" /></>,
  pEven: <path d="M3 3c1 0 2 1 5 1s4-1 5-1c1 3 1 6-1 9-1 1.500-3 2.500-4 2.500S5 13.500 4 12C2 9 2 6 3 3zM8 6.500c-2 0-2.500 3.500 0 3.500s2-3.500 0-3.500z" fill={W} fillRule="evenodd" />,
  pNonzero: <path d="M3 2.500c1 0 2 1 5 1s4-1 5-1c1 3 1 6-1 9-1 1.500-3 2.500-4 2.500S5 13 4 11.500C2 8.500 2 5.500 3 2.500z" fill="#f2f2f2" />,
  noPaint: <><rect width="16" height="16" fill="#fff" /><circle cx="8" cy="8" r="5" fill="none" stroke="#c8c8c8" strokeWidth="1.400" /><path d="M1.500 1.500l13 13M14.500 1.500l-13 13" stroke="#c8384a" strokeWidth="1.300" /></>,
};

const Icon = ({ name, size = 16 }) => <SvgIcon width={size} height={size} viewBox="0 0 16 16">{ICONS[name]}</SvgIcon>;
const Spin2 = ({ value, w, h, pad, ml, dimMinus, dimPlus, bw, sep }) => (
  <Spin $w={w} $h={h} $pad={pad} $ml={ml}>
    <SpinValue>{value}</SpinValue>
    <SpinBtn $w={bw} $line={sep} $dim={dimMinus}><Bar $s={10} /></SpinBtn>
    <SpinBtn $w={bw} $line={sep} $dim={dimPlus}><Bar $s={10} /><BarV $s={10} /></SpinBtn>
  </Spin>
);

const UNIT = 58.44;
const RulerH = () => {
  const zero = 64, L = 610, ticks = [], labels = [];
  for (let i = -16; i <= 96; i++) {
    const x = zero + (i * UNIT) / 8;
    if (x < 0 || x > L) continue;
    const h = i % 8 === 0 ? 17 : i % 4 === 0 ? 8 : i % 2 === 0 ? 5 : 3;
    ticks.push(<line key={i} x1={x} x2={x} y1={21} y2={21 - h} stroke="#c8c8c8" strokeWidth="1" />);
    if (i % 8 === 0) labels.push(<text key={i} x={x + 2} y={12} fontSize="11" fontFamily="Open Sans" fill="#bdbdbd">{i / 8}</text>);
  }
  return (
    <Rule width="610" height="21" viewBox="0 0 610 21">
      <rect width="610" height="21" fill="#333" />
      <rect x="64" width="496" height="21" fill="#1c1c1c" />
      {ticks}{labels}
      <path d="M190 14h24" stroke={B} strokeWidth="1.500" />
      <circle cx="190" cy="14" r="2.500" fill="#1c1c1c" stroke={B} strokeWidth="1.400" />
      <circle cx="214" cy="14" r="2.500" fill="#1c1c1c" stroke={B} strokeWidth="1.400" />
      <path d="M475 17h8l-4 4z" fill="#eee" />
    </Rule>
  );
};
const RulerV = () => {
  const zero = 98, L = 624, ticks = [], labels = [];
  for (let i = -8; i <= 72; i++) {
    const y = zero + (i * UNIT) / 8;
    if (y < 0 || y > L) continue;
    const h = i % 8 === 0 ? 17 : i % 4 === 0 ? 8 : i % 2 === 0 ? 5 : 3;
    ticks.push(<line key={i} x1={20} x2={20 - h} y1={y} y2={y} stroke="#c8c8c8" strokeWidth="1" />);
    if (i % 8 === 0 && i <= 64) labels.push(<text key={i} transform={`translate(5 ${y + 2}) rotate(90)`} fontSize="11" fontFamily="Open Sans" fill="#bdbdbd">{i / 8}</text>);
  }
  return (
    <Rule width="20" height="624" viewBox="0 0 20 624">
      <rect width="20" height="624" fill="#333" />
      <rect y="98" width="20" height="496" fill="#1c1c1c" />
      {ticks}{labels}
      <path d="M13 153v44" stroke={B} strokeWidth="1.500" />
      <circle cx="13" cy="153" r="2.500" fill="#1c1c1c" stroke={B} strokeWidth="1.400" />
      <circle cx="13" cy="198" r="2.500" fill="#1c1c1c" stroke={B} strokeWidth="1.400" />
      <path d="M16 314v8l4-4z" fill="#eee" />
    </Rule>
  );
};

const MENU = [['File', 13.3], ['Edit', 12.4], ['View', 14.6], ['Layer', 10.7], ['Object', 14.8], ['Path', 11.6], ['Text', 10.6], ['Filters', 12.8], ['Extensions', 11.4], ['Help', 0]];
const CMD = [['new', 'open', 'save', 'print'], ['imp', 'exp'], ['undo', 'redo'], ['copy', 'cut', 'paste'], ['zoomSel', 'zoomDraw', 'zoomPage', 'zoomCenter'], ['raise', 'lockA', 'lockB'], ['grp', 'ungrp'], ['fillStroke', 'textBig', 'layers', 'xml', 'css', 'align'], ['find', 'tools']];
const TOOLS_A = ['select', 'node', 'tweakShape', 'rect', 'circle', 'star', 'cube', 'spiral', 'pencil', 'pen', 'callig'];
const TOOLS_B = ['gradient', 'mesh', 'dropper', 'bucket', 'tweak', 'spray', 'eraser', 'connector', 'pages', 'magnifier', 'docs'];
const PAINTS = ['pFlat', 'pLinear', 'pRadial', 'pMesh', 'pPattern', 'pSwatch'];
const HUE = 'linear-gradient(90deg,#f00,#ff0 17%,#0f0 33%,#0ff 50%,#00f 67%,#f0f 83%,#f00)';
const ALPHA = 'linear-gradient(90deg,rgba(0,0,0,0),#000), conic-gradient(#9a9a9a 25%,#666 0 50%,#9a9a9a 0 75%,#666 0) 0 0 / 13px 13px';
const SLIDERS = [['H:', HUE, '0', true, false], ['S:', '#000', '0', true, false], ['L:', 'linear-gradient(90deg,#000,#fff)', '0', true, false], ['A:', ALPHA, '100', false, true]];
const SWATCHES = '1a1a1a 333333 4d4d4d 666666 999999 b3b3b3 cccccc e6e6e6 ececec f2f2f2 f9f9f9 800000 ff0000 808000 ffff00 008000 00ff00 008080 00ffff 000080 0000ff 800080 ff00ff 2b0000 550000 800000 aa0000 d40000 ff0000 ff2a2a ff5555 ff8080 ffaaaa ffd5d5 280b0b 501616 782121 a02c2c c83737 d35f5f de8787 e9afaf f4d7d7 241c1c 483737 6c5353 917c7c ac9393 c8b7b7 e3dbdb 2b1100 552200 803300 aa4400 d45500 ff6600 ff7f2a ff9955 ffb380 ffccaa ffe6d5'.split(' ');

export default function App() {
  return (
    <Screen>
      <GlobalStyle />
      <TopBand viewBox="0 0 1013 4">
        <g fill="none" strokeWidth="1">
          <circle cx="243" cy="-2" r="5" stroke="#777" /><circle cx="267" cy="-2" r="5" stroke="#888" /><circle cx="291" cy="-2" r="5" stroke="#c33" />
          <circle cx="315" cy="-2" r="5" stroke="#e44" /><circle cx="339" cy="-2" r="5" stroke="#e80" /><circle cx="363" cy="-2" r="5" stroke="#ec0" />
          <circle cx="387" cy="-2" r="5" stroke="#2a4" /><circle cx="411" cy="-2" r="5" stroke="#28c" /><circle cx="435" cy="-2" r="5" stroke="#34c" /><circle cx="459" cy="-2" r="5" stroke="#93c" />
        </g>
        <circle cx="215" cy="-6" r="9" fill="#000" stroke="#888" />
        <rect x="555" y="0" width="15" height="3" fill="#1b6ec2" />
      </TopBand>
      <Window>
        <TitleBar>
          <SvgIcon width="15" height="15" viewBox="0 0 16 16">
            <path d="M8 0l7 7-2 2-1-1 1 4-2 1-1-2-1 4-2-1V9l-2 2-3-3z" fill="#111" />
            <path d="M8 1.500L12 6H10L9 5 8 6.500 7 5 6 6H4z" fill="#e8e8e8" />
          </SvgIcon>
          <AppTitle>*New document 1 - Inkscape</AppTitle>
          <WinControls>
            <WinButton><SvgIcon width="12" height="12" viewBox="0 0 12 12"><path d="M1 6h10" stroke="#fff" /></SvgIcon></WinButton>
            <WinButton><SvgIcon width="12" height="12" viewBox="0 0 12 12"><rect x="1.500" y="1.500" width="9" height="9" fill="none" stroke="#fff" /></SvgIcon></WinButton>
            <WinButton><SvgIcon width="12" height="12" viewBox="0 0 12 12"><path d="M1.500 1.500l9 9M10.500 1.500l-9 9" stroke="#fff" /></SvgIcon></WinButton>
          </WinControls>
        </TitleBar>
        <MenuBar>{MENU.map(([t, g]) => <MenuItem key={t} $gap={g}>{t}</MenuItem>)}</MenuBar>
        <CommandBar>
          {CMD.map((group, i) => (
            <React.Fragment key={i}>
              {i > 0 && <Sep />}
              {group.map(n => <Slot key={n}><Icon name={n} /></Slot>)}
            </React.Fragment>
          ))}
          <Grow />
          <Slot><Icon name="snap" /></Slot>
          <SquareButton><Icon name="triLeft" /></SquareButton>
        </CommandBar>
        <TextBar>
          <Control $w={27} $center><Icon name="fontCollect" /></Control>
          <Control $w={26} $center><Icon name="reload" /></Control>
          <Control $w={165} $pad={9}>
            sans-serif
            <ComboArrow $w={0} />
            <Slot $w={24}><Icon name="warn" size={14} /></Slot>
            <ComboArrow $w={27}><Caret /></ComboArrow>
          </Control>
          <Control $w={119} $pad={8}>Normal<ComboArrow $w={28}><Caret /></ComboArrow></Control>
          <Control $w={105} $pad={17}>72<ComboArrow $w={27}><Caret /></ComboArrow></Control>
          <Control $w={53} $pad={9}>pt<ComboArrow $w={22}><Caret /></ComboArrow></Control>
          <PlainSlot $w={18}><Icon name="aa" /></PlainSlot>
          <Spin $w={74} $h={28} $pad={5}><SpinValue>0.00</SpinValue><SpinBtn $w={14} $line $dim><Bar $s={10} /></SpinBtn><SpinBtn $w={14} $line><Bar $s={10} /><BarV $s={10} /></SpinBtn></Spin>
          <Control $w={58} $pad={9}>lines<Caret $ml={4} /></Control>
          <Control $w={47} $pad={7}><Icon name="alignL" /><Caret $ml={3} /></Control>
          <PlainSlot $w={30}><Icon name="sup" /></PlainSlot>
          <PlainSlot $w={29}><Icon name="sub" /></PlainSlot>
          <Control $w={71} $pad={6}><Icon name="spaceA" size={12} />&nbsp;Spacing</Control>
          <Control $w={48} $pad={7}><Icon name="lineA" size={17} /><Caret $ml={3} /></Control>
          <Control $w={48} $pad={9}><Icon name="lineB" size={17} /><Caret $ml={1} $dim /></Control>
          <Control $w={47} $pad={7}><Icon name="lineA" size={17} /><Caret $ml={3} /></Control>
        </TextBar>
        <Workspace>
          <ToolRail>
            {TOOLS_A.map(n => <Tool key={n}><Icon name={n} /></Tool>)}
            <ActiveTool>A<svg width="2" height="16"><rect width="2" height="16" fill="#12b030" /></svg></ActiveTool>
            {TOOLS_B.map(n => <Tool key={n}><Icon name={n} /></Tool>)}
          </ToolRail>
          <Stage>
            <Corner><LockButton><Icon name="lock" size={13} /></LockButton></Corner>
            <RulerH />
            <ScrollCell>
              <ManagedButton><Icon name="display" size={15} /></ManagedButton>
              <ManagedFill />
            </ScrollCell>
            <RulerV />
            <Canvas>
              <Sheet>
                <Glyph>1</Glyph>
                <DashBox />
                <Caretline />
                <HandleSq />
                <HandleDia />
              </Sheet>
            </Canvas>
            <ScrollCell>
              <VTrack><VThumb /></VTrack>
              <GripCell><GripDot /><GripDot /><GripDot /></GripCell>
            </ScrollCell>
            <HTrack><HThumb /></HTrack>
            <ManagedCell>
              <ManagedButton><Icon name="managed" size={13} /></ManagedButton>
              <ManagedFill />
            </ManagedCell>
          </Stage>
          <Dock>
            <TabStrip>
              <DockTab $w={163} $pad={17}><Icon name="layers" size={14} />Layers and Objects<TabClose>✕</TabClose></DockTab>
              <DockTab $w={122} $pad={9} $on><Icon name="fillStroke" size={14} />Fill and Stroke<TabClose>✕</TabClose></DockTab>
              <TabMenu><Icon name="chevDown" /></TabMenu>
            </TabStrip>
            <Frame>
              <SubTabs>
                <SubTab $w={43} $on $pad={5}><Icon name="fillBox" size={12} />Fill</SubTab>
                <SubTab $w={100} $pad={10}><Icon name="strokeBox" size={12} />Stroke paint</SubTab>
                <SubTab $w={90} $pad={8}><Icon name="strokeStyle" size={13} />Stroke style</SubTab>
              </SubTabs>
              <PaintRow>
                <PaintSlot $w={24}><Icon name="pNone" size={12} /></PaintSlot>
                <PaintSlot $w={20} $on><Icon name="pFlat" size={14} /></PaintSlot>
                {PAINTS.slice(1).map(n => <PaintSlot key={n}><Icon name={n} size={14} /></PaintSlot>)}
                <PaintSlot>?</PaintSlot>
                <Grow />
                <PaintSlot><Icon name="pEven" size={18} /></PaintSlot>
                <PaintSlot $w={21} $on><Icon name="pNonzero" size={18} /></PaintSlot>
                <PaintSlot $w={7} />
              </PaintRow>
              <FlatRow>
                <FlatLabel>Flat color</FlatLabel>
                <ModeButton><RainbowChip />HSL<Caret $ml={9} /></ModeButton>
              </FlatRow>
              <WheelRow><TriRight /><Wheel />Color Wheel</WheelRow>
              <Sliders>
                {SLIDERS.map(([l, bg, v, dm, dp]) => (
                  <SliderRow key={l}>
                    <SliderLabel>{l}</SliderLabel>
                    <Track $bg={bg} />
                    <Spin2 value={v} w={59} ml={3} pad={6} bw={14} sep dimMinus={dm} dimPlus={dp} />
                  </SliderRow>
                ))}
              </Sliders>
              <DockSpacer />
              <RgbaRow>
                <Icon name="managed" size={15} />
                <Icon name="managedRing" size={15} />
                <Slot $w={22} $h={16}><Icon name="dropper" size={15} /></Slot>
                <Grow />
                RGBA:
                <RgbaField>000000ff</RgbaField>
              </RgbaRow>
            </Frame>
            <BlendRow>Blend mode:<BlendCombo>Normal<Caret /></BlendCombo></BlendRow>
            <ScaleRow>
              <ScaleLabel>Blur (%)</ScaleLabel>
              <ScaleValue>0.0</ScaleValue>
              <SpinBtn $w={13} $dim><Bar $s={10} /></SpinBtn>
              <SpinBtn $w={13}><Bar $s={10} /><BarV $s={10} /></SpinBtn>
            </ScaleRow>
            <ScaleRow>
              <ScaleLabel $on>Opacity (%)</ScaleLabel>
              <ScaleValue>100.0</ScaleValue>
              <SpinBtn $w={13}><Bar $s={10} /></SpinBtn>
              <SpinBtn $w={13} $dim><Bar $s={10} /><BarV $s={10} /></SpinBtn>
            </ScaleRow>
          </Dock>
        </Workspace>
        <PaletteRow>
          <BigSwatch $c="#fff"><Icon name="noPaint" size={27} /></BigSwatch>
          <BigSwatch $c="#000"><Dot /></BigSwatch>
          <BigSwatch $c="#808080" />
          <BigSwatch $c="#fff" />
          {SWATCHES.map((c, i) => <SmallSwatch key={i} $c={`#${c}`} />)}
          <PaletteEnd>
            <Slot $w={25} $h={16}><Icon name="chevUp" size={14} /></Slot>
            <Slot $w={25} $h={16}><Icon name="chevDn" size={14} /></Slot>
            <PaletteMenu><MenuLine /><MenuLine /><MenuLine /></PaletteMenu>
          </PaletteEnd>
        </PaletteRow>
        <StatusBar>
          <StyleGrid>
            <StyleLabel>Fill:</StyleLabel>
            <FillChip />
            <StyleLabel>Stroke:</StyleLabel>
            <StrokeInfo><i>None</i><span>0.265</span></StrokeInfo>
          </StyleGrid>
          <Opa>O:
            <Spin2 value="100" w={57} h={32} pad={4} bw={14} sep dimPlus />
          </Opa>
          <LayerTag>
            <LayerBar />Layer 1
            <LayerIcons><Icon name="eye" size={13} /><Icon name="unlock" size={13} /></LayerIcons>
          </LayerTag>
          <Hint><span><Bold>Click</Bold> to select or create text, <Bold>drag</Bold> to create flowed text; then type.</span></Hint>
          <Coords>
            <span>X:</span><span>7.10</span>
            <span>Y:</span><span>3.77</span>
          </Coords>
          <ShortLabel>Z:</ShortLabel>
          <Spin2 value="76%" w={80} h={32} pad={9} bw={17} sep />
          <ShortLabel $ml={8}>R:</ShortLabel>
          <Spin2 value="0.00°" w={85} h={32} pad={3} bw={22} sep />
        </StatusBar>
      </Window>
      <Mark $x={57} $y={91} $w={85} $h={29} />
      <Mark $x={224} $y={87} $w={75} $h={35} />
      <Mark $x={357} $y={93} $w={58} $h={33} />
      <Mark $x={2} $y={119} $w={35} $h={37} />
      <Mark $x={6} $y={405} $w={31} $h={37} />
      <Mark $x={187} $y={265} $w={125} $h={102} $b={5} $r={21} />
    </Screen>
  );
}
